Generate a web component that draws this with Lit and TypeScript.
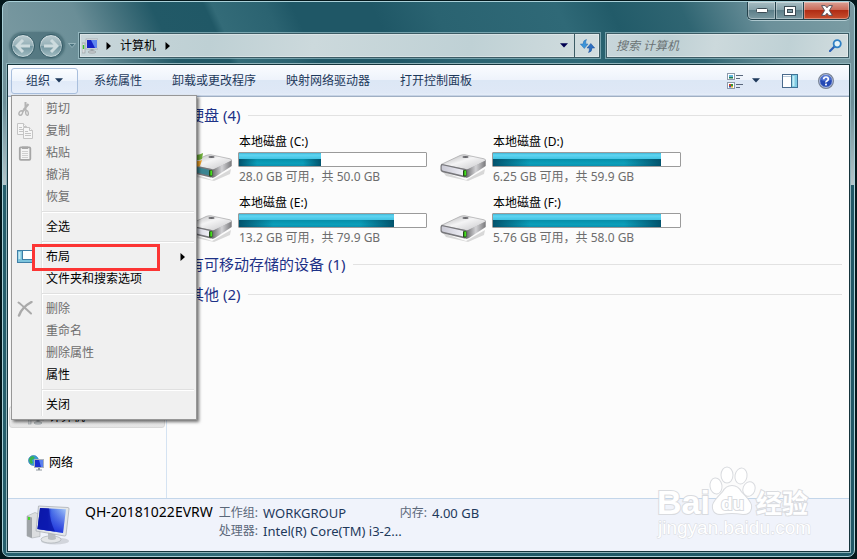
import { LitElement, html, css, svg, nothing } from "lit";
import { customElement } from "lit/decorators.js";
import { styleMap } from "lit/directives/style-map.js";

interface Drive {
  letter: string;
  used: number;
  stats: string;
  system?: boolean;
}

interface MenuEntry {
  label: string;
  disabled?: boolean;
  icon?: unknown;
  submenu?: boolean;
  marked?: boolean;
}

const drives: Drive[] = [
  { letter: "C:", used: 44, stats: "28.0 GB 可用，共 50.0 GB", system: true },
  { letter: "D:", used: 90, stats: "6.25 GB 可用，共 59.9 GB" },
  { letter: "E:", used: 83, stats: "13.2 GB 可用，共 79.9 GB" },
  { letter: "F:", used: 90, stats: "5.76 GB 可用，共 58.0 GB" },
];

const cutIcon = html`<svg width="16" height="16" viewBox="0 0 16 16" fill="none" stroke="#b4b4b4">
  <path d="M8.5 1v6.5L5 11M11.5 3L6.5 9" stroke-width="2" />
  <path d="M8 8l2 2" stroke-width="1.6" />
  <ellipse cx="3.8" cy="12" rx="1.6" ry="2.4" transform="rotate(30 3.8 12)" stroke-width="1.4" />
  <ellipse cx="10" cy="12" rx="1.3" ry="2.4" transform="rotate(-8 10 12)" stroke-width="1.4" />
</svg>`;

const copyIcon = html`<svg width="16" height="16" viewBox="0 0 16 16" fill="#f6f6f6" stroke="#c4c4c4">
  <path d="M.5 .5h6l3 3v8h-9z" />
  <path d="M6.5 .5v3h3M2 4.5h3M2 6.5h4M2 8.5h4" />
  <path d="M6.5 4.5h6l3 3v8h-9z" />
  <path d="M12.5 4.5v3h3M8 8.5h3M8 10.5h6M8 12.5h6" />
</svg>`;

const pasteIcon = html`<svg width="16" height="16" viewBox="0 0 16 16">
  <rect x="2.8" y="2.3" width="10.5" height="12.500" rx="1" fill="#f4f4f4" stroke="#a6a6a6" stroke-width="1.8" />
  <path d="M5 1.500h6v2.500H5z" fill="#a8a8a8" />
  <path d="M5 6.500h6M5 8.500h6M5 10.500h6M5 12.500h6" stroke="#cfcfcf" />
</svg>`;

const layoutIcon = html`<svg width="16" height="16" viewBox="0 0 16 16">
  <rect x=".5" y="1.500" width="15" height="12" fill="#fff" stroke="#3f7fa6" />
  <path d="M1 2h4v9H1zM1 11h14v2H1z" fill="#7cc3dc" />
  <path d="M2.500 3v7" stroke="#c9ebf5" stroke-width="2" />
  <path d="M5.500 2v9M5 10.500h10" stroke="#3f7fa6" />
</svg>`;

const deleteIcon = html`<svg width="16" height="16" viewBox="0 0 16 16" fill="none" stroke="#a9a9a9" stroke-linecap="round">
  <path d="M1.500 1.500C5 4 10 9 14 12.500" stroke-width="2" />
  <path d="M14.500 1C9 4 4 9 2 14.500" stroke-width="2.400" />
</svg>`;

const menuGroups: MenuEntry[][] = [
  [
    { label: "剪切", disabled: true, icon: cutIcon },
    { label: "复制", disabled: true, icon: copyIcon },
    { label: "粘贴", disabled: true, icon: pasteIcon },
    { label: "撤消", disabled: true },
    { label: "恢复", disabled: true },
  ],
  [{ label: "全选" }],
  [{ label: "布局", icon: layoutIcon, submenu: true, marked: true }, { label: "文件夹和搜索选项" }],
  [
    { label: "删除", disabled: true, icon: deleteIcon },
    { label: "重命名", disabled: true },
    { label: "删除属性", disabled: true },
    { label: "属性" },
  ],
  [{ label: "关闭" }],
];

const arrowDown = (color: string) => html`<svg width="8" height="5" viewBox="0 0 8 5">
  <path d="M0 .3h8L4 4.600z" fill=${color} />
</svg>`;

const arrowRight = html`<svg width="5" height="8" viewBox="0 0 5 8"><path d="M.5 0L5 4 .5 8z" fill="#000" /></svg>`;

const pcShape = svg`
  <rect x="0" y="5" width="3" height="10" fill="#d9dcde" stroke="#8f9699" stroke-width=".6" />
  <rect x=".8" y="7" width="1.400" height="4" fill="#39c02a" />
  <rect x="4" y="1" width="12" height="10" fill="#dfe3e6" stroke="#9aa0a6" stroke-width=".6" />
  <rect x="5" y="2" width="10" height="8" fill="#1420c4" />
  <path d="M9 2h6v8h-2z" fill="#5f86ee" />
  <path d="M8.500 11h3v2h-3z" fill="#a0a6ab" />
  <ellipse cx="10" cy="14" rx="4" ry="1.300" fill="#c3c7ca" stroke="#8f9699" stroke-width=".5" />`;

const smallPc = html`<svg width="16" height="16" viewBox="0 0 16 16">${pcShape}</svg>`;

@customElement("drive-icon")
export class DriveIcon extends LitElement {
  static properties = { system: { type: Boolean } };
  declare system: boolean;

  static styles = css`
    :host {
      display: block;
      width: 46px;
      height: 28px;
    }
    svg {
      display: block;
    }
  `;

  render() {
    return html`<svg width="46" height="28" viewBox="0 0 46 28">
      <defs>
        <linearGradient id="top" x1="0" y1="0" x2="1" y2="1">
          <stop offset="0" stop-color="#a9a9ab" />
          <stop offset=".45" stop-color="#f4f4f5" />
          <stop offset="1" stop-color="#c4c4c7" />
        </linearGradient>
        <linearGradient id="side" x1="0" y1="0" x2="1" y2="0">
          <stop offset="0" stop-color="#6b6b6e" />
          <stop offset=".5" stop-color="#d2d2d5" />
          <stop offset="1" stop-color="#77777a" />
        </linearGradient>
        <linearGradient id="front" x1="0" y1="0" x2="1" y2="0">
          <stop offset="0" stop-color="#c9c9d4" />
          <stop offset="1" stop-color="#f1f1f8" />
        </linearGradient>
      </defs>
      <path d="M3 19l23 8 19-11-1 5-16 7-22-5z" fill="#000" opacity=".14" />
      <path d="M1 11.500L20 2.500q2-1 5-.7l19 4q2 .6 1.500 2L28 17z" fill="url(#top)" stroke="#98989b" stroke-width=".6" />
      <path d="M27 16.500L45.700 7.500v5.500L29 24q-2 1-3 .5z" fill="url(#side)" />
      <path d="M2 11q-1.500.3-1.500 2v4q0 1.500 2 2.200l22 5.300q3 .4 3.300-1.800v-4.400q0-1.800-2-2.300z" fill="#77777b" />
      <path d="M2.500 12.200q-.8.100-.8 1.300v2.700q0 1.200 1.500 1.600l20 4.700q2 .3 2-1.300v-2.700q0-1.200-1.500-1.600z"
        fill=${this.system ? "#3b8592" : "url(#front)"} />
      <rect x="23" y="17" width="3.500" height="6.500" rx="1" fill="#234a1a" />
      <rect x="24.300" y="17.500" width="1.800" height="5" fill="#45e01c" />
      <ellipse cx="25.500" cy="4" rx="3.200" ry="1" fill="#66666a" />
      ${this.system
        ? svg`<path d="M0 1q5-3 8 0v5q-4-2-8 0z" fill="#e2572b" />
            <path d="M8 1q4 2 9-1l-1 6q-4 2-8 0z" fill="#6fae3a" />
            <path d="M8 7q4 2 8 0l-2 6q-3 1-6 0z" fill="#f3a62a" />`
        : nothing}
    </svg>`;
  }
}

@customElement("organize-menu")
export class OrganizeMenu extends LitElement {
  static styles = css`
    :host {
      display: block;
      box-sizing: border-box;
      width: 186px;
      padding: 2px 2px 3px;
      border: 1px solid #979797;
      background: linear-gradient(90deg, transparent 27px, #e2e3e3 27px, #e2e3e3 28px, #fff 28px, #fff 29px, transparent 29px)
          content-box,
        #f0f0f0;
      box-shadow: 2px 2px 3px rgba(0, 0, 0, 0.55);
    }
    ul {
      margin: 0;
      padding: 0;
      list-style: none;
    }
    .group + .group::before {
      content: "";
      display: block;
      height: 1px;
      margin: 3px 0 3px 28px;
      background: #e0e0e0;
      border-bottom: 1px solid #fff;
    }
    li {
      position: relative;
    }
    .item {
      display: flex;
      align-items: center;
      width: 100%;
      height: 22px;
      padding: 0 9px 0 3px;
      border: 0;
      background: none;
      color: #000;
      font: inherit;
      text-align: left;
      white-space: nowrap;
    }
    .item:disabled {
      color: #6d6d6d;
    }
    .glyph {
      width: 16px;
      height: 16px;
      margin-right: 13px;
    }
    .glyph svg {
      display: block;
    }
    .label {
      flex: 1;
    }
    .mark {
      position: absolute;
      left: 18px;
      top: -2px;
      box-sizing: border-box;
      width: 128px;
      height: 27px;
      border: 3px solid #fc3534;
      pointer-events: none;
    }
  `;

  render() {
    return html`${menuGroups.map(
      (group) => html`<ul class="group">
        ${group.map(
          (entry) => html`<li>
            <button class="item" ?disabled=${entry.disabled ?? false}>
              <span class="glyph">${entry.icon ?? nothing}</span>
              <span class="label">${entry.label}</span>
              ${entry.submenu ? arrowRight : nothing}
            </button>
            ${entry.marked ? html`<span class="mark"></span>` : nothing}
          </li>`,
        )}
      </ul>`,
    )}`;
  }
}

@customElement("app-root")
export class AppRoot extends LitElement {
  static styles = css`
    :host {
      display: flex;
      position: relative;
      box-sizing: border-box;
      min-height: 100vh;
      padding: 1px 2px 2px;
      background: #04181c;
      font: 12px/18px "Noto Sans", "Noto Sans CJK SC", sans-serif;
      color: #000;
    }
    button,
    input {
      font: inherit;
    }
    button {
      margin: 0;
      padding: 0;
    }
    svg {
      display: block;
      flex: none;
    }
    .window {
      flex: 1;
      min-width: 0;
      display: flex;
      flex-direction: column;
      padding: 0 4px 4px;
      border: 1px solid #a9d0d8;
      border-radius: 7px;
      background: linear-gradient(180deg, #7b9aa2, #6c8f98 55%, #b4c6ca) 0 0 / 5px 183px no-repeat,
        linear-gradient(180deg, #7b9aa2, #6c8f98 55%, #b4c6ca) 100% 0 / 5px 183px no-repeat,
        linear-gradient(65deg, #7b9aa2 0, #6a8e97 11%, #4a7681 15%, #225967 20%, #205866 26%, #336b78 27%,
          #2b6371 33%, #1f5766 36%, #1f5766 45%, #2a6371 52%, #2f6977 66%, #225b69 72%, #2f6572 80%, #6b909a 89%, #7d9ea5 100%)
          0 0 / 100% 64px no-repeat,
        linear-gradient(90deg, #265f6c, #336b78 30%, #205866 40%, #205866);
    }
    .captions {
      display: flex;
      justify-content: flex-end;
      height: 18px;
    }
    .caption {
      display: flex;
      align-items: center;
      justify-content: center;
      box-sizing: border-box;
      width: 28px;
      border: 1px solid #24424c;
      border-top: 0;
      border-right: 0;
      background: linear-gradient(#a7bdc3, #86a2aa 45%, #5d7f89 50%, #7b9aa2);
      box-shadow: inset 0 0 0 1px rgba(255, 255, 255, 0.35), 0 1px 0 rgba(220, 240, 245, 0.6);
    }
    .caption:first-child {
      border-bottom-left-radius: 5px;
    }
    .caption.close {
      width: 47px;
      border-right: 1px solid #24424c;
      border-bottom-right-radius: 5px;
      background: linear-gradient(#dba195, #cb6c5a 45%, #b02c14 50%, #c8502f);
    }
    .navbar {
      display: flex;
      align-items: stretch;
      height: 25px;
      margin: 13px 1px 6px 3px;
    }
    .travel {
      display: flex;
      align-items: center;
      gap: 4px;
      padding: 0 1px;
      border-radius: 13px;
      background: rgba(30, 70, 80, 0.35);
      box-shadow: 0 0 2px 1px rgba(20, 60, 70, 0.4);
    }
    .round {
      display: flex;
      align-items: center;
      justify-content: center;
      box-sizing: border-box;
      width: 24px;
      height: 24px;
      border: 1px solid #345b66;
      border-radius: 50%;
      background: linear-gradient(#b9cbd0, #95b0b7 48%, #7396a0 52%, #a3bdc3);
      box-shadow: inset 0 0 0 1px rgba(255, 255, 255, 0.35);
    }
    .recent {
      display: flex;
      align-items: center;
      justify-content: center;
      width: 15px;
      border: 0;
      background: none;
    }
    .field {
      display: flex;
      align-items: center;
      box-sizing: border-box;
      border: 1px solid #3c5c65;
      background: linear-gradient(100deg, #c8d6da, #bed0d4 25%, #ccd9dc 45%, #bfd1d5 75%, #d2dddf);
      box-shadow: 0 0 0 1px rgba(180, 215, 222, 0.55), inset 0 0 0 1px rgba(255, 255, 255, 0.35);
    }
    .address {
      flex: 1;
      min-width: 0;
      padding-left: 2px;
    }
    .crumb {
      flex: 1;
      display: flex;
      align-items: center;
      gap: 9px;
      padding-left: 8px;
    }
    .crumb a {
      color: #000;
      text-decoration: none;
    }
    .history,
    .refresh {
      display: flex;
      align-items: center;
      justify-content: center;
      align-self: stretch;
      width: 20px;
      border: 0;
      background: none;
    }
    .refresh {
      width: 25px;
      border-left: 1px solid #3c5c65;
    }
    .search {
      width: 243px;
      margin-left: 6px;
      padding: 0 6px 0 9px;
    }
    .search input {
      flex: 1;
      min-width: 0;
      padding: 0;
      border: 0;
      outline: 0;
      background: none;
      font-style: italic;
    }
    .search input::placeholder {
      color: #6b7375;
      opacity: 1;
    }
    .client {
      flex: 1;
      display: flex;
      flex-direction: column;
      border: 1px solid #15343c;
      background: #fcfcfc;
      box-shadow: 0 0 0 1px #8fb3bb;
    }
    .toolbar {
      display: flex;
      align-items: center;
      box-sizing: border-box;
      height: 32px;
      padding: 0 15px 0 3px;
      border-bottom: 1px solid #a0afc3;
      background: linear-gradient(#fafcff, #eef3fb 48%, #dce7f5 50%, #dfe8f6 90%, #e9f0f9);
      box-shadow: inset 0 -1px 0 #c6d3e6;
    }
    .organize {
      position: relative;
      margin-right: 1px;
    }
    .organize organize-menu {
      position: absolute;
      left: 0;
      top: 27px;
      z-index: 2;
    }
    .tool {
      display: flex;
      align-items: center;
      height: 26px;
      padding: 0 15px;
      border: 0;
      background: none;
      color: #1e395b;
      white-space: nowrap;
    }
    .tool.open {
      gap: 5px;
      padding: 0 14px;
      border: 1px solid #a9bfdd;
      border-radius: 3px;
      background: linear-gradient(#fbfdff, #eef4fc 48%, #e0eaf8 50%, #e6eefa);
    }
    .spacer {
      flex: 1;
    }
    .tool.views {
      gap: 9px;
      padding: 0 12px 0 10px;
    }
    .tool.icon {
      padding: 0 10px;
    }
    .tool.icon:last-child {
      padding-right: 0;
    }
    .body {
      flex: 1;
      display: flex;
    }
    .sidebar {
      display: flex;
      flex-direction: column;
      gap: 24px;
      width: 158px;
      padding-top: 309px;
      border-right: 1px solid #d5e3f2;
    }
    .place {
      display: flex;
      align-items: center;
      gap: 5px;
      height: 20px;
      margin: 0 1px;
      padding-left: 18px;
      border: 1px solid transparent;
      border-radius: 3px;
      color: #000;
      text-decoration: none;
    }
    .place.current {
      border-color: #d9d9d9;
      background: linear-gradient(#f8f8f8, #e5e5e5);
    }
    .files {
      flex: 1;
      min-width: 0;
      padding: 8px 7px 8px 19px;
    }
    .heading {
      display: flex;
      align-items: center;
      gap: 8px;
      margin: 0 0 10px 3px;
      color: #1e3287;
      font-size: 15px;
      font-weight: 400;
      line-height: 20px;
      white-space: nowrap;
    }
    .heading::after {
      content: "";
      flex: 1;
      height: 1px;
      background: #e2e2e2;
    }
    .heading.tight {
      margin-bottom: 8px;
    }
    .drives {
      display: grid;
      grid-template-columns: repeat(auto-fill, 241px);
      gap: 8px 13px;
      margin-bottom: 7px;
    }
    .drive {
      display: grid;
      grid-template-columns: 46px 189px;
      column-gap: 6px;
      align-items: start;
    }
    .drive drive-icon {
      margin-top: 20px;
    }
    .info {
      display: flex;
      flex-direction: column;
      gap: 1px;
      white-space: nowrap;
    }
    .info span {
      padding-left: 1px;
    }
    .bar {
      box-sizing: border-box;
      height: 15px;
      border: 1px solid #9b9b9b;
      border-radius: 1px;
      background: #fff;
    }
    .fill {
      height: 100%;
      background: linear-gradient(90deg, rgba(0, 60, 85, 0.75), transparent 22%, transparent 78%, rgba(0, 60, 85, 0.75)) 0 100% /
          100% 7px no-repeat,
        linear-gradient(#3fb6d6, #5fd5f2 15%, #42c3e2 46%, #0790ab 50%, #0a9fba 80%, #0b8fae);
    }
    .stats {
      color: #6d6d6d;
    }
    .details {
      display: flex;
      align-items: center;
      box-sizing: border-box;
      height: 53px;
      padding-left: 18px;
      border-top: 1px solid #c3d6ea;
      background: #f0f3fb;
      white-space: nowrap;
    }
    .host {
      align-self: flex-start;
      margin: 4px 6px 0 14px;
      font-size: 14px;
    }
    .specs {
      display: grid;
      grid-template-columns: 181px auto;
      align-self: flex-start;
      margin: 5px 0 0;
    }
    .spec {
      display: flex;
      gap: 5px;
    }
    .spec dt {
      color: #5a6779;
    }
    .spec dd {
      margin: 0;
      color: #1e395b;
      font-size: 13px;
    }
    .watermark {
      position: absolute;
      right: 40px;
      bottom: 14px;
      z-index: 3;
      font-family: "Liberation Sans", "Noto Sans CJK SC", sans-serif;
      pointer-events: none;
    }
  `;

  render() {
    return html`
      <div class="window">
        <div class="captions">
          <button class="caption" aria-label="最小化">
            <svg width="12" height="6"><rect x=".5" y=".5" width="11" height="4" rx="1" fill="#fff" stroke="#3c4c55" /></svg>
          </button>
          <button class="caption" aria-label="最大化">
            <svg width="12" height="10">
              <rect x=".5" y=".5" width="11" height="9" fill="#fff" stroke="#3c4c55" />
              <rect x="3.500" y="3.500" width="5" height="3" fill="#7f9ca5" stroke="#3c4c55" />
            </svg>
          </button>
          <button class="caption close" aria-label="关闭">
            <svg width="12" height="11" viewBox="0 0 12 11">
              <path d="M.6 .6h3.600L6 2.800 7.800.6h3.600L8.400 5.500l3 4.900H7.800L6 8.200l-1.800 2.200H.6l3-4.900z" fill="#fff" stroke="#4a4a54" stroke-width=".9" />
            </svg>
          </button>
        </div>
        <div class="navbar">
          <div class="travel">
            <button class="round" aria-label="后退">
              <svg width="16" height="14" viewBox="0 0 16 14">
                <path d="M8 1L2 7l6 6M2.500 7H15" fill="none" stroke="#cddbde" stroke-width="3" />
              </svg>
            </button>
            <button class="round" aria-label="前进">
              <svg width="16" height="14" viewBox="0 0 16 14">
                <path d="M8 1l6 6-6 6M13.500 7H1" fill="none" stroke="#cddbde" stroke-width="3" />
              </svg>
            </button>
          </div>
          <button class="recent" aria-label="最近的页面">
            <svg width="8" height="5"><path d="M.5 .5h7L4 4.500z" fill="#4e7681" stroke="#a4c0c6" stroke-width=".8" /></svg>
          </button>
          <div class="field address">
            ${smallPc}
            <nav class="crumb">${arrowRight}<a href="#computer">计算机</a>${arrowRight}</nav>
            <button class="history" aria-label="历史">${arrowDown("#000050")}</button>
            <button class="refresh" aria-label="刷新">
              <svg width="15" height="14" viewBox="0 0 15 14">
                <path d="M6.500 .5Q3 1 3 5H.3L4.300 9.500 8 5H5.800Q5.500 2 6.500 .5z" fill="#3a94d8" stroke="#2a6fb4" stroke-width=".5" />
                <path d="M8.500 13.500q3.500-.5 3.500-4.500h2.700L10.800 4.500 7 9h2.300q.3 3-.8 4.500z" fill="#2c6fc0" stroke="#1f4f98" stroke-width=".5" />
              </svg>
            </button>
          </div>
          <div class="field search">
            <input type="text" aria-label="搜索" placeholder="搜索 计算机" />
            <svg width="13" height="13" viewBox="0 0 13 13" fill="none">
              <path d="M5.500 7.500L1 12" stroke="#2b5fb4" stroke-width="2.200" stroke-linecap="round" />
              <circle cx="8.200" cy="4.800" r="3.600" fill="#e6f3f8" stroke="#2f80c4" stroke-width="1.800" />
            </svg>
          </div>
        </div>
        <div class="client">
          <div class="toolbar">
            <div class="organize">
              <button class="tool open" aria-expanded="true">组织 ${arrowDown("#1e395b")}</button>
              <organize-menu></organize-menu>
            </div>
            ${["系统属性", "卸载或更改程序", "映射网络驱动器", "打开控制面板"].map(
              (label) => html`<button class="tool">${label}</button>`,
            )}
            <span class="spacer"></span>
            <button class="tool views" aria-label="更改视图">
              <svg width="16" height="16" viewBox="0 0 16 16">
                <rect x=".5" y=".5" width="7" height="6" fill="#fff" stroke="#8c99aa" />
                <path d="M2 4h4v1.500H2z" fill="#1f7a4a" /><path d="M2 2h4v2H2z" fill="#5fb4dc" />
                <rect x=".5" y="9.500" width="7" height="6" fill="#fff" stroke="#8c99aa" />
                <path d="M2 11h2v2H2z" fill="#c9402c" /><path d="M4 11h2v2H4z" fill="#2f9a3a" />
                <path d="M2 13h2v1.500H2z" fill="#2f58b4" /><path d="M4 13h2v1.500H4z" fill="#e0b020" />
                <path d="M9 2.500h7M9 5.500h4M9 11.500h7M9 14.500h4" stroke="#59677c" />
              </svg>
              ${arrowDown("#1e395b")}
            </button>
            <button class="tool icon" aria-label="显示预览窗格">
              <svg width="16" height="14" viewBox="0 0 16 14">
                <rect x=".5" y=".5" width="15" height="13" fill="#fff" stroke="#4a6a8c" />
                <path d="M1 2.500h14" stroke="#b8c8d8" />
                <rect x="9.500" y=".5" width="6" height="13" fill="#7fcbe2" stroke="#3f7396" />
                <path d="M11.500 2v10" stroke="#c4ecf6" stroke-width="2" />
              </svg>
            </button>
            <button class="tool icon" aria-label="获取帮助">
              <svg width="16" height="16" viewBox="0 0 16 16">
                <circle cx="8" cy="8" r="7.400" fill="#2348b4" stroke="#7d8796" stroke-width="1.200" />
                <circle cx="8" cy="8" r="6.400" fill="none" stroke="#c9d2e4" stroke-width=".9" />
                <path d="M3 7a5 5 0 0 1 10 0q-5 2-10 0z" fill="#6f92e6" opacity=".6" />
                <path d="M5.700 6.300Q5.700 4 8 4t2.300 2.100Q10.300 7.300 9 8T8 9.600" fill="none" stroke="#fff" stroke-width="1.700" />
                <rect x="7.100" y="10.600" width="1.800" height="1.800" fill="#fff" />
              </svg>
            </button>
          </div>
          <div class="body">
            <aside class="sidebar">
              <a class="place current" href="#computer">${smallPc}计算机</a>
              <a class="place" href="#network">
                <svg width="16" height="16" viewBox="0 0 16 16">
                  <circle cx="5.500" cy="5.500" r="5" fill="#3a9bd8" stroke="#2474ac" stroke-width=".6" />
                  <path d="M1 4q2-3 4-3l2 2-3 2 1 3-2 1q-2-2-2-5z" fill="#39b54a" />
                  <rect x="6.500" y="4.500" width="9" height="8" fill="#1a2ed0" stroke="#aab2bc" />
                  <path d="M11 5h4v7h-2z" fill="#5a80ee" />
                  <path d="M10 13h2v1.500h2v1H8v-1h2z" fill="#8d959d" />
                </svg>
                网络
              </a>
            </aside>
            <main class="files">
              <h2 class="heading tight">硬盘 (4)</h2>
              <div class="drives">
                ${drives.map(
                  (drive) => html`<div class="drive">
                    <drive-icon .system=${drive.system ?? false}></drive-icon>
                    <div class="info">
                      <span>本地磁盘 (${drive.letter})</span>
                      <div class="bar"><div class="fill" style=${styleMap({ width: `${drive.used}%` })}></div></div>
                      <span class="stats">${drive.stats}</span>
                    </div>
                  </div>`,
                )}
              </div>
              <h2 class="heading">有可移动存储的设备 (1)</h2>
              <h2 class="heading">其他 (2)</h2>
            </main>
          </div>
          <footer class="details">
            <svg width="45" height="40" viewBox="0 0 45 40">
              <defs>
                <linearGradient id="screen" x1="0" y1="0" x2="1" y2="0">
                  <stop offset="0" stop-color="#0a1cae" />
                  <stop offset=".35" stop-color="#1426cc" />
                  <stop offset=".5" stop-color="#4f78ea" />
                  <stop offset="1" stop-color="#a9cdfa" />
                </linearGradient>
                <linearGradient id="glow" x1="0" y1="0" x2="0" y2="1">
                  <stop offset="0" stop-color="#1528d8" stop-opacity="0" />
                  <stop offset="1" stop-color="#1528d8" stop-opacity=".9" />
                </linearGradient>
              </defs>
              <path d="M1 11l8-3.500 5 2v22L6 33l-5-2z" fill="#dcdee0" stroke="#a8acb0" stroke-width=".6" />
              <path d="M1 11l5 1.500V33l-5-2z" fill="#9fa3a7" />
              <rect x="2" y="12" width="2" height="3" fill="#45d62a" />
              <ellipse cx="29" cy="36" rx="14" ry="3.600" fill="#000" opacity=".12" />
              <ellipse cx="25" cy="34.500" rx="10" ry="3.600" fill="#e4e6e8" stroke="#abb0b4" stroke-width=".7" />
              <path d="M22 27l7 1 1 6q-4 2-8 0z" fill="#b9bdc1" />
              <path d="M12.500 1l29.500 1.500q1.200.2 1 1.500L40 30q-.3 1.200-1.500 1L10 26z" fill="#e3e6e9" stroke="#a3a8ad" stroke-width=".7" />
              <path d="M14 3l26 1.300L37 28 11.500 24z" fill="url(#screen)" />
              <path d="M14 3l26 1.300L37 28 11.500 24z" fill="url(#glow)" />
              <path d="M14 3l9 .5q1 13 6 23L11.500 24z" fill="#0a16a4" opacity=".75" />
            </svg>
            <span class="host">QH-20181022EVRW</span>
            <dl class="specs">
              <div class="spec"><dt>工作组:</dt><dd>WORKGROUP</dd></div>
              <div class="spec"><dt>内存:</dt><dd>4.00 GB</dd></div>
              <div class="spec"><dt>处理器:</dt><dd>Intel(R) Core(TM) i3-2...</dd></div>
            </dl>
          </footer>
        </div>
      </div>
      <svg class="watermark" width="162" height="80" viewBox="0 0 162 80" fill="#fff" stroke="#d9dbdf" stroke-width="2" paint-order="stroke">
        <ellipse cx="61" cy="21" rx="5.500" ry="7.500" transform="rotate(-8 61 21)" />
        <ellipse cx="72" cy="10" rx="5.500" ry="7.500" />
        <ellipse cx="86" cy="11" rx="5.500" ry="7.500" transform="rotate(10 86 11)" />
        <ellipse cx="94" cy="24" rx="5.500" ry="7" transform="rotate(20 94 24)" />
        <path d="M77 21q6 0 9 6 9 9 10 13 1 9-8 9-6-1-11-1t-11 1q-9 0-8-9 1-4 10-13 3-6 9-6z" />
        <text x="2" y="49" font-size="34" font-weight="700">Bai</text>
        <text x="66" y="45" font-size="19" font-weight="700">du</text>
        <text x="101" y="48" font-size="26" font-weight="700">经验</text>
        <text x="3" y="69" font-size="19" stroke-width="1">jingyan.baidu.com</text>
      </svg>
    `;
  }
}
